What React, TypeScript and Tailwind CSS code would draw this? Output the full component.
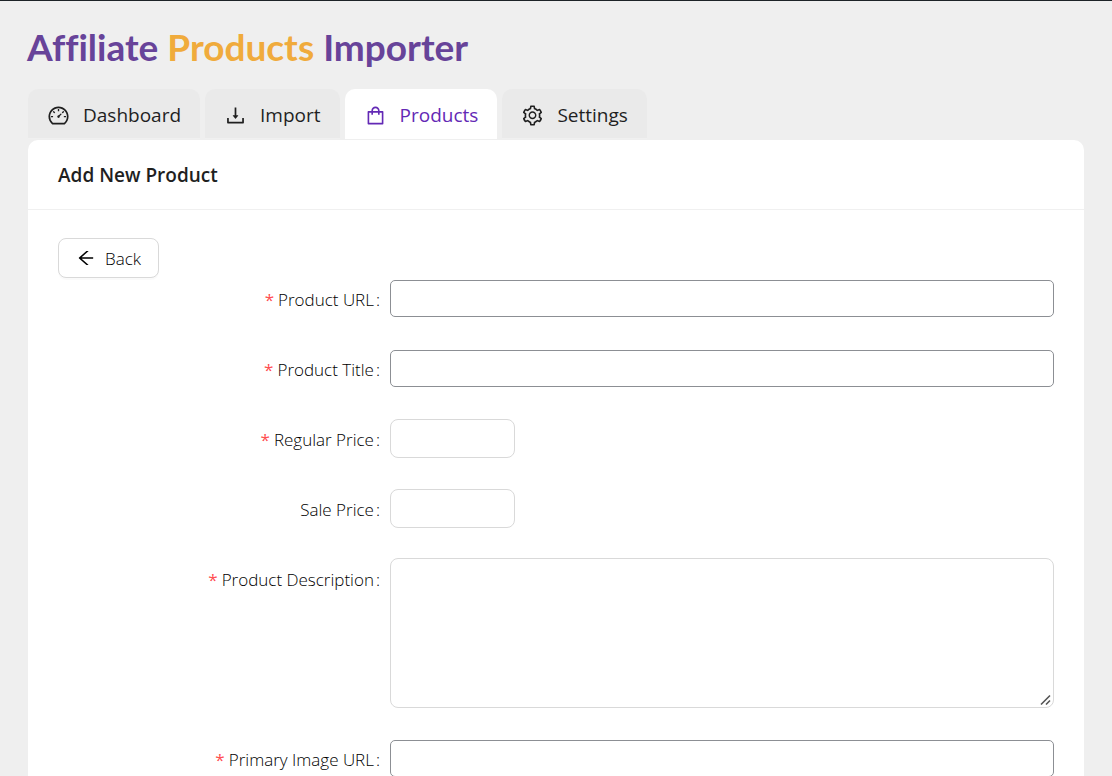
import type { ReactNode } from 'react';
import type { IconType } from 'react-icons';
import {
  AiOutlineArrowLeft,
  AiOutlineDashboard,
  AiOutlineDownload,
  AiOutlineSetting,
  AiOutlineShopping,
} from 'react-icons/ai';

type Tab = { label: string; icon: IconType; active?: boolean };

const tabs: Tab[] = [
  { label: 'Dashboard', icon: AiOutlineDashboard },
  { label: 'Import', icon: AiOutlineDownload },
  { label: 'Products', icon: AiOutlineShopping, active: true },
  { label: 'Settings', icon: AiOutlineSetting },
];

function Field({ id, label, required, children }: { id: string; label: string; required?: boolean; children: ReactNode }) {
  return (
    <div className="grid min-h-10 grid-cols-3 items-center">
      <label htmlFor={id} className="flex h-10 items-center justify-end self-start pt-1 pr-2.5">
        {required && <span className="mr-1 font-normal text-[#ff4d4f]">*</span>}
        {label}
        <span className="ml-0.5">:</span>
      </label>
      <div className="relative col-span-2 flex items-center">{children}</div>
    </div>
  );
}

const textBox = 'h-[37px] w-full rounded-[5px] border border-[#8c8f94] bg-white px-3 outline-none';
const priceBox = 'h-[39px] w-[125px] rounded-[8px] border border-[#d9d9d9] bg-white px-3 outline-none';

export default function App() {
  return (
    <div className="h-screen overflow-y-auto border-t border-[#1d2327] bg-[#efefef] px-7 font-['Open_Sans',sans-serif] text-[17px] font-light text-black [scrollbar-width:none]">
      <h1 className="-ml-px pt-6 text-[37px] leading-[44px] font-bold text-[#674399] font-['Lato',sans-serif] [font-variant-ligatures:none]">
        Affiliate <span className="text-[#f0ab3c]">Products</span> Importer
      </h1>

      <nav className="mt-5 flex gap-[5px] text-[19px] font-normal text-[#1f1f1f]">
        {tabs.map(({ label, icon: Icon, active }) => (
          <button
            key={label}
            type="button"
            className={
              active
                ? 'flex h-[50px] items-center gap-[13px] rounded-t-[10px] border-b border-white bg-white px-[19px] pt-1 text-[#6329b5]'
                : 'flex h-[50px] items-center gap-[13px] rounded-t-[10px] border-b border-[#f0f0f0] bg-[#eaeaea] px-[19px] pt-1'
            }
          >
            <Icon className="size-[23px]" />
            <span>{label}</span>
          </button>
        ))}
      </nav>

      <main className="mt-px rounded-t-[10px] bg-white">
        <h2 className="border-b border-[#f0f0f0] px-[30px] pt-[21px] pb-[19px] text-[19px] leading-[29px] font-semibold text-[#1f1f1f]">
          Add New Product
        </h2>
        <form className="px-[30px] pt-7 pb-10">
          <button
            type="button"
            className="flex h-10 items-center gap-[9px] rounded-[8px] border border-[#d9d9d9] bg-white px-[17px] shadow-[0_2px_0_rgba(0,0,0,0.02)]"
          >
            <AiOutlineArrowLeft className="size-5" />
            <span className="pt-0.5">Back</span>
          </button>
          <div className="flex flex-col gap-[30px]">
            <Field id="url" label="Product URL" required>
              <input id="url" type="text" className={textBox} />
            </Field>
            <Field id="title" label="Product Title" required>
              <input id="title" type="text" className={textBox} />
            </Field>
            <Field id="regular" label="Regular Price" required>
              <input id="regular" type="text" inputMode="decimal" className={priceBox} />
            </Field>
            <Field id="sale" label="Sale Price">
              <input id="sale" type="text" inputMode="decimal" className={priceBox} />
            </Field>
            <Field id="description" label="Product Description" required>
              <textarea
                id="description"
                className="h-[150px] w-full resize-y rounded-[8px] border border-[#d9d9d9] bg-white px-3 py-2 outline-none [&::-webkit-resizer]:bg-transparent"
              />
              <svg
                className="pointer-events-none absolute right-0.5 bottom-0.5 size-3"
                viewBox="0 0 12 12"
                fill="none"
                stroke="#555555"
                strokeWidth="1.6"
                aria-hidden="true"
              >
                <path d="M1 10.5 10 1.5M6 10.5l4-4" />
              </svg>
            </Field>
            <Field id="image" label="Primary Image URL" required>
              <input id="image" type="text" className={textBox} />
            </Field>
          </div>
        </form>
      </main>
    </div>
  );
}
